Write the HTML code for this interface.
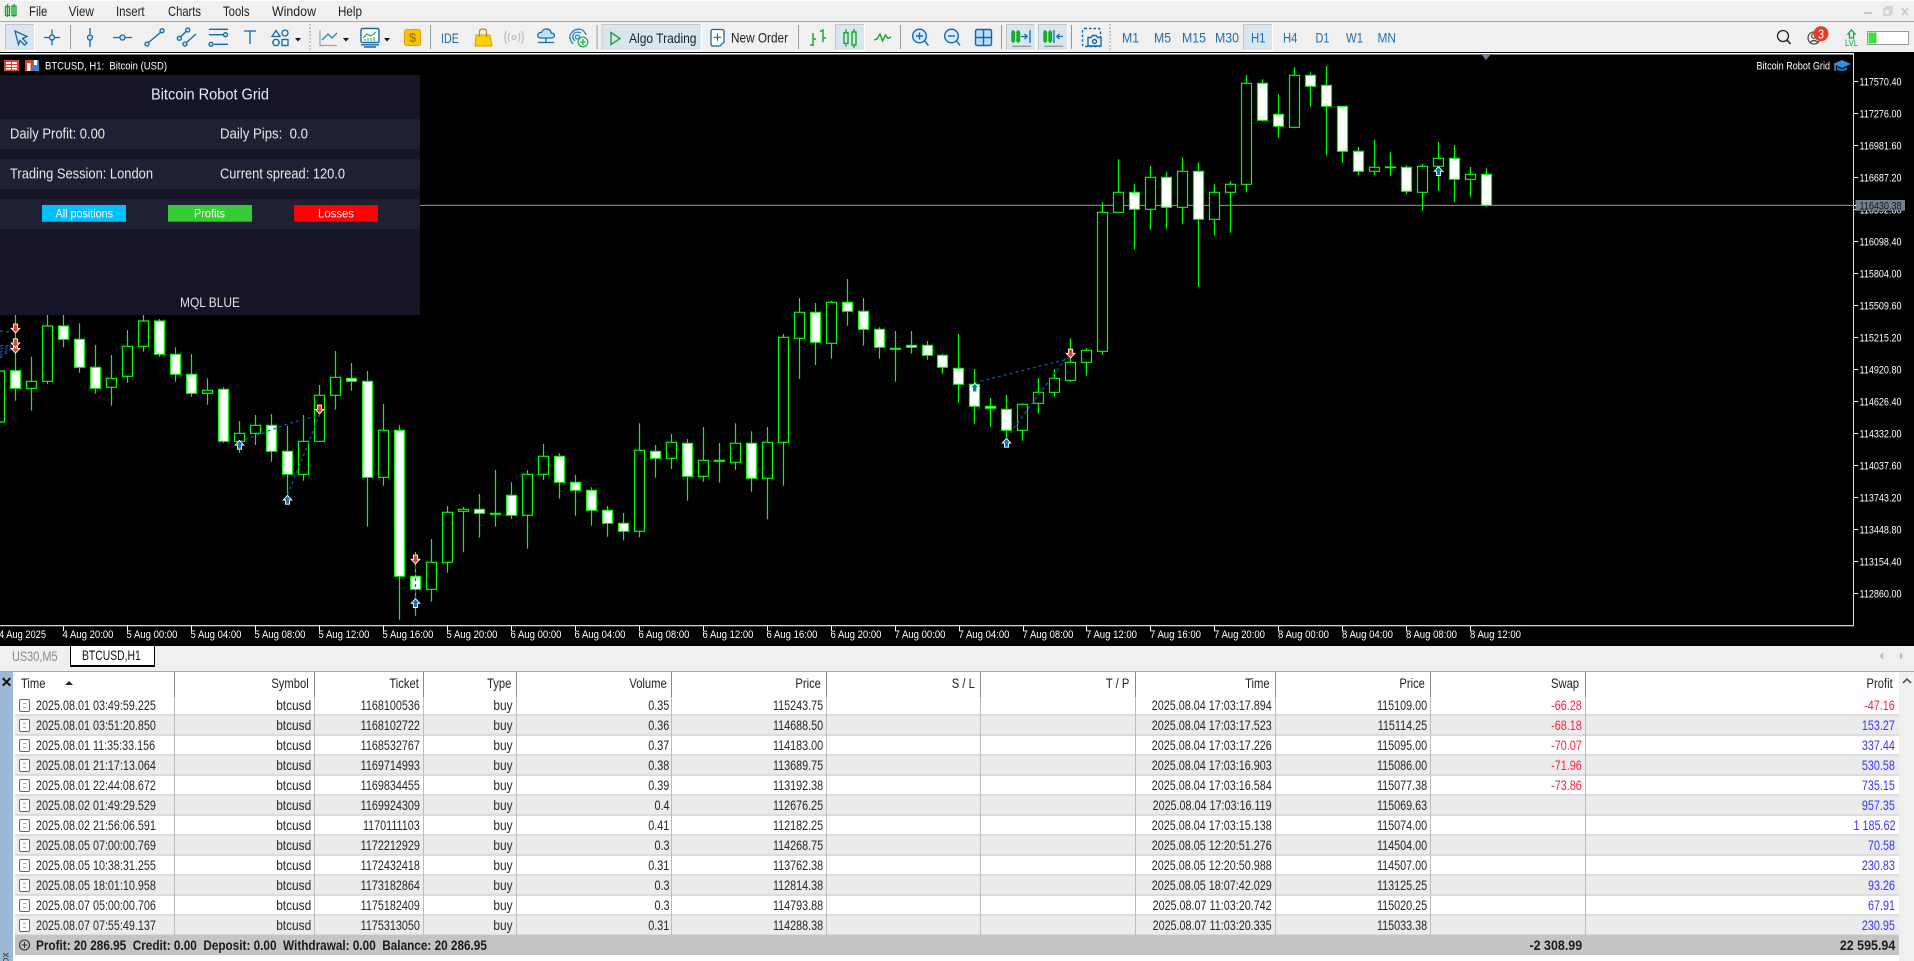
<!DOCTYPE html>
<html lang="en"><head><meta charset="utf-8"><title>MetaTrader 5 BTCUSD</title>
<style>
html,body{margin:0;padding:0;width:1914px;height:961px;overflow:hidden;background:#fff;font-family:"Liberation Sans",sans-serif}
body{position:relative}
svg{position:absolute;left:0;top:0;display:block}
svg text{font-family:"Liberation Sans",sans-serif}
.tabs{position:absolute;left:0;top:646px;width:1914px;height:25px;background:#f0f0f0}
.hl{position:absolute;left:0;top:671px;width:1914px;height:1px;background:#a8a8a8}
.strip{position:absolute;left:0;top:672px;width:13px;height:289px;background:#9cb9d8;overflow:hidden}
.side{position:absolute;left:1899px;top:672px;width:15px;height:289px;background:#f0f0f0}
.hdr{position:absolute;left:15px;top:672px;width:1884px;height:24px;background:#fff;font-size:14px;color:#222}
.hdr span,.r span{position:absolute;top:0;white-space:nowrap;transform:scaleX(.77);transform-origin:100% 50%;line-height:19px}
.hdr span{line-height:22px;transform:scaleX(.8)}
.rows{position:absolute;left:15px;top:696px;width:1884px;font-size:14px;color:#262626}
.r{position:relative;height:18px;border-bottom:2px solid #dcdcdc;background:#fff}
.r.e{background:#ebebeb}
.r i{position:absolute;left:4px;top:3px;width:9px;height:11px;border:1px solid #1f78c8;border-radius:2px;background:#fff}
.r i:after{content:"";position:absolute;left:3px;top:3px;width:3px;height:3px;border-top:1px solid #7fb2dd;border-bottom:1px solid #7fb2dd}
.r .a{left:21px;transform-origin:0 50%}
.hdr .a{left:6px;transform-origin:0 50%}
.r .s,.r .y{transform:scaleX(.85)}
.s{right:1588px}.k{right:1479px}.y{right:1386px}.v{right:1230px}.p{right:1076px}.t{right:627px}.q{right:472px}.w{right:317px;color:#ff1f3d}.f{right:4px;color:#3434ff}.f.n{color:#ff1f3d}
.sum{position:absolute;left:15px;top:935px;width:1884px;height:20px;background:#c4c4c4;font-size:14px;font-weight:bold;color:#1a1a1a}
.sum span{position:absolute;top:0;line-height:20px;white-space:nowrap;transform:scaleX(.89);transform-origin:100% 50%}
.sum .l{left:21px;transform-origin:0 50%;transform:scaleX(.84)}
.sep{position:absolute;top:672px;width:1px;height:263px;background:#bdbdbd}
.sep:before{content:"";position:absolute;left:0;top:0;width:1px;height:25px;background:#8a8a8a}
.tab{position:absolute;font-size:14px;white-space:nowrap;transform:scaleX(.78);transform-origin:0 50%;line-height:20px}
</style></head><body>

<svg width="1914" height="646" viewBox="0 0 1914 646" xmlns="http://www.w3.org/2000/svg">
<defs>
<g id="up"><path d="M0-4.600L4.300 0H2.100V4.200H-2.100V0H-4.300Z" fill="#1a6fb5" stroke="#fff" stroke-width=".9"/></g>
<g id="dn"><path d="M0 4.600L4.300 0H2.100V-4.200H-2.100V0H-4.300Z" fill="#e0452a" stroke="#fff" stroke-width=".9"/></g>
</defs>
<rect width="1914" height="52" fill="#f0f0f0"/>
<rect width="1914" height="1" fill="#fff"/>
<rect y="21" width="1914" height="1" fill="#a8a8a8"/>
<rect y="52" width="1914" height="594" fill="#000"/>

<!-- logo + menu -->
<g fill="none" stroke="#12a52a" stroke-width="1.300"><rect x="5.500" y="6.500" width="4" height="9"/><path d="M7.500 4V17"/><rect x="12" y="6" width="4" height="9.500"/><path d="M14 4V17"/></g>
<g font-size="14" fill="#222">
<text x="29" y="16" textLength="18.400" lengthAdjust="spacingAndGlyphs">File</text>
<text x="68.600" y="16" textLength="25.300" lengthAdjust="spacingAndGlyphs">View</text>
<text x="116" y="16" textLength="28.600" lengthAdjust="spacingAndGlyphs">Insert</text>
<text x="168" y="16" textLength="33" lengthAdjust="spacingAndGlyphs">Charts</text>
<text x="223" y="16" textLength="26.500" lengthAdjust="spacingAndGlyphs">Tools</text>
<text x="272" y="16" textLength="44" lengthAdjust="spacingAndGlyphs">Window</text>
<text x="338" y="16" textLength="24" lengthAdjust="spacingAndGlyphs">Help</text>
</g>
<!-- window controls -->
<rect x="1864" y="12" width="8" height="2" fill="#c4c4c4"/>
<g fill="none" stroke="#c4c4c4" stroke-width="1.200"><rect x="1884" y="9" width="6" height="6"/><path d="M1886 9V7H1892V13H1890"/><path d="M1902 8L1908 15M1908 8L1902 15" stroke-width="1.500"/></g>

<!-- active buttons -->
<g fill="#d8e6f2" stroke="none">
<rect x="5" y="24" width="29" height="26"/><rect x="601.500" y="24" width="99.500" height="26"/><rect x="835" y="24" width="29" height="26"/><rect x="1006" y="24" width="29" height="26"/><rect x="1038" y="24" width="29" height="26"/><rect x="1243" y="24" width="29" height="26"/>
</g>
<g fill="none" stroke="#c6c6c6"><path d="M5.500 50V24.500H34"/><path d="M602 50V24.500H701"/><path d="M835.500 50V24.500H864"/><path d="M1006.500 50V24.500H1035"/><path d="M1038.500 50V24.500H1067"/><path d="M1243.500 50V24.500H1272"/></g>
<g fill="none" stroke="#fff"><path d="M34.500 24V50.500H5"/><path d="M701.500 24V50.500H602"/><path d="M864.500 24V50.500H835"/><path d="M1035.500 24V50.500H1006"/><path d="M1067.500 24V50.500H1038"/><path d="M1272.500 24V50.500H1243"/></g>

<!-- separators -->
<g stroke="#9a9a9a" stroke-width="1"><path d="M70.500 25V49M430.500 25V49M597 25V49M798.500 25V49M900.500 25V49M1001.500 25V49M1071.500 25V49"/></g>
<g stroke="#bdbdbd" stroke-width="2" stroke-dasharray="1.500 2"><path d="M310 24V50M1110 24V50"/></g>

<!-- drawing tools -->
<g fill="none" stroke="#1268ad" stroke-width="1.300">
<path d="M15 31L27 36.500L22.500 38.500L27 43L24.500 45L20 40.500L18.500 44.500Z" fill="#dcebf7"/>
<path d="M44 37.500H60M52 29.500V45.500"/><circle cx="52" cy="37.500" r="2.500" fill="#cfe3f4"/>
<path d="M90 28V47"/><circle cx="90" cy="37.500" r="2.500" fill="#cfe3f4"/>
<path d="M113 37.500H132"/><circle cx="122.500" cy="37.500" r="2.500" fill="#cfe3f4"/>
<path d="M148 43L161 32"/><circle cx="147" cy="44" r="2" fill="#cfe3f4"/><circle cx="162" cy="30.700" r="2" fill="#cfe3f4"/>
<path d="M180.500 37L186.500 31M186 43L196 34"/><circle cx="179.300" cy="38.300" r="2" fill="#cfe3f4"/><circle cx="187.700" cy="30" r="2" fill="#cfe3f4"/><circle cx="185" cy="44" r="2" fill="#cfe3f4"/>
<path d="M209 29.300H228M209 34.700H223M214 44.300H228"/><circle cx="225.500" cy="34.700" r="2" fill="#cfe3f4"/><circle cx="211" cy="44.300" r="2" fill="#cfe3f4"/>
<path d="M244 31H256M250 31V44"/>
<path d="M276 30.500L280 36.500H272Z"/><circle cx="285" cy="33" r="3"/><path d="M272.500 42.500L274.300 39.500H277.700L279.500 42.500L277.700 45.500H274.300Z"/><rect x="282" y="39.500" width="6" height="6"/>
</g>
<g fill="#111"><path d="M295 38H301L298 41.500Z"/><path d="M343 38H349L346 41.500Z"/><path d="M384 38H390L387 41.500Z"/></g>

<!-- chart type icons -->
<path d="M320 30V45.500H337" fill="none" stroke="#a0a0a0" stroke-width="1.200"/>
<path d="M322 40L328 34L332 38L337 33" fill="none" stroke="#2a83c9" stroke-width="1.300"/>
<g fill="none" stroke="#1268ad" stroke-width="1.400"><rect x="361" y="28.500" width="18" height="14" rx="1.500" fill="#fff"/><path d="M361 44.800H379M364 47H376"/></g>
<path d="M363 38L367 34L371 36L376 32" fill="none" stroke="#1a9a3a"/><path d="M365 41V39M368 41V38M371 41V38M374 41V37" stroke="#1a9a3a"/>
<rect x="404.500" y="29.500" width="16" height="16" rx="2" fill="#fdc300" stroke="#dd9f10"/>
<text x="412.500" y="42" font-size="13" font-weight="bold" text-anchor="middle" fill="#a97f00">$</text>
<text x="441" y="43" font-size="14" fill="#1b6aa8" textLength="18" lengthAdjust="spacingAndGlyphs">IDE</text>
<path d="M476 35H490L492 46H475Z" fill="#ffd000" stroke="#cd9c20"/><path d="M479.500 37V31.500Q479.500 29 483 29Q486.500 29 486.500 31.500V37" fill="none" stroke="#b98a10" stroke-width="1.200"/>
<g fill="none" stroke="#c0c0c0" stroke-width="1.300"><circle cx="514" cy="37.500" r="2"/><path d="M509.500 33Q507 37.500 509.500 42M518.500 33Q521 37.500 518.500 42M506.500 31Q503 37.500 506.500 44M521.500 31Q525 37.500 521.500 44"/></g>
<path d="M541 38Q537 38 538 34.500Q539 32 541.500 32.500Q543 28.500 547 29Q551 29.500 551 33Q555 33.500 554.500 36Q554 38 551 38Z" fill="#bfe0f8" stroke="#1268ad" stroke-width="1.200"/>
<path d="M546 38V42M538 42.500H554" fill="none" stroke="#1268ad" stroke-width="1.300"/>
<g fill="none" stroke="#2a83c9" stroke-width="1.300"><path d="M573 44Q568 38 571 33.500Q575 28 581 29.500Q585 31 586 35M575 41Q571 37 574 33.500Q577 31 581 33"/><circle cx="577.500" cy="37" r="2"/></g>
<circle cx="583" cy="42" r="4.800" fill="#fff" stroke="#19b84a" stroke-width="1.300"/><path d="M583 39V45M580 42H586" stroke="#19b84a" stroke-width="1.300"/>

<!-- algo / order -->
<path d="M611 32.500L620 38.500L611 44.500Z" fill="none" stroke="#16a32a" stroke-width="1.400"/>
<text x="629" y="43" font-size="14" fill="#222" textLength="67.500" lengthAdjust="spacingAndGlyphs">Algo Trading</text>
<path d="M713 29.500H722Q724 29.500 724 31.500V42L720 46H713Q711 46 711 44V31.500Q711 29.500 713 29.500Z" fill="#fff" stroke="#1268ad" stroke-width="1.300"/><path d="M717.500 33.500V41M713.800 37.300H721.200" stroke="#1268ad" stroke-width="1.100"/>
<text x="731" y="42.500" font-size="14" fill="#222" textLength="57" lengthAdjust="spacingAndGlyphs">New Order</text>

<!-- chart modes -->
<g fill="none" stroke="#11aa22" stroke-width="1.400">
<path d="M813 33V46M810 45H813M813 39H816M823 29V42M820 31H823M823 38H826"/>
<rect x="844" y="32.700" width="4" height="10.700"/><path d="M846 29.500V32.700M846 43.400V46.500"/><rect x="852" y="32" width="4" height="13"/><path d="M854 29V32M854 45V48"/>
<path d="M874 40L877 39L880 34L882.500 41L885.500 35L888 38.500L891 37"/>
<rect x="1012" y="32" width="2.500" height="9"/><path d="M1013.200 30V43"/><rect x="1017" y="32" width="2.500" height="9"/><path d="M1018.200 30V43"/>
<rect x="1044" y="32" width="2.500" height="9"/><path d="M1045.200 30V43"/><rect x="1049" y="32" width="2.500" height="9"/><path d="M1050.200 30V43"/>
</g>
<g fill="none" stroke="#1268ad" stroke-width="1.300">
<path d="M1021 36.500H1027M1024.500 34L1027.200 36.500L1024.500 39M1030 30V43"/>
<path d="M1054 30V43M1063 36.500H1057M1059.500 34L1056.800 36.500L1059.500 39"/>
</g>
<path d="M1012 46.300H1031M1044 46.300H1063" stroke="#9a9a9a" stroke-width="1.300"/>
<g fill="none" stroke="#1268ad" stroke-width="1.400">
<circle cx="919.500" cy="36" r="6.800" fill="#d6ecfb"/><path d="M924.500 41L928.500 45.500"/><path d="M916 36H923M919.500 32.500V39.500"/>
<circle cx="951.500" cy="36" r="6.800" fill="#d6ecfb"/><path d="M956.500 41L960 45.500"/><path d="M948 36H955"/>
<rect x="975.500" y="29.500" width="16" height="16" rx="1.500" fill="#b5def8"/><path d="M983.500 29.500V45.500M975.500 37.500H991.500"/>
<rect x="1082.500" y="28.500" width="18" height="18" rx="2" stroke-dasharray="2.500 2"/>
<path d="M1088 37.500H1091L1092.500 35.500H1096L1097.500 37.500H1101V46H1088Z" fill="#f0f0f0"/><circle cx="1094.500" cy="41.500" r="2"/>
</g>

<!-- timeframes -->
<g font-size="14" fill="#1e6fb0">
<text x="1122" y="42.500" textLength="17" lengthAdjust="spacingAndGlyphs">M1</text>
<text x="1154" y="42.500" textLength="17" lengthAdjust="spacingAndGlyphs">M5</text>
<text x="1182" y="42.500" textLength="24" lengthAdjust="spacingAndGlyphs">M15</text>
<text x="1215" y="42.500" textLength="24" lengthAdjust="spacingAndGlyphs">M30</text>
<text x="1251" y="42.500" textLength="14.500" lengthAdjust="spacingAndGlyphs">H1</text>
<text x="1283" y="42.500" textLength="14.500" lengthAdjust="spacingAndGlyphs">H4</text>
<text x="1315.500" y="42.500" textLength="14" lengthAdjust="spacingAndGlyphs">D1</text>
<text x="1346" y="42.500" textLength="17" lengthAdjust="spacingAndGlyphs">W1</text>
<text x="1377.500" y="42.500" textLength="18.500" lengthAdjust="spacingAndGlyphs">MN</text>
</g>

<!-- right tools -->
<circle cx="1783" cy="36" r="5.500" fill="none" stroke="#222" stroke-width="1.300"/><path d="M1787 40L1790.500 44" stroke="#222" stroke-width="1.500"/>
<g fill="none" stroke="#444" stroke-width="1.200"><circle cx="1814" cy="38" r="6"/><circle cx="1814" cy="36" r="2.300"/><path d="M1810 42.500Q1814 38.500 1818 42.500"/></g>
<circle cx="1821" cy="33.700" r="7.500" fill="#e23c28"/><text x="1821" y="38.300" font-size="13" text-anchor="middle" fill="#fff" textLength="6" lengthAdjust="spacingAndGlyphs">3</text>
<path d="M1851.500 30L1855 34H1853.500V38H1849.500V34H1848Z" fill="none" stroke="#13a53f" stroke-width="1.300"/>
<text x="1845" y="46" font-size="9" fill="#13a53f" textLength="13" lengthAdjust="spacingAndGlyphs">LVL</text>
<rect x="1867.500" y="31.500" width="41" height="13" fill="#fff" stroke="#999"/><rect x="1868.500" y="32.500" width="8" height="11" fill="#3ede3e"/>

<!-- chart frame -->
<rect y="53" width="1854" height="1.500" fill="#fff"/>
<rect x="1853" y="53" width="1" height="573" fill="#e8e8e8"/>
<rect y="625" width="1854" height="1.300" fill="#d0d0d0"/>
<path d="M1481 54H1491L1486 60Z" fill="#708090"/>
<rect x="420" y="204.800" width="1434" height="1.200" fill="#808080"/>

<!-- wicks -->
<path fill="none" stroke="#0f0" stroke-width="1.200" d="M-.5 371V425M15.500 315V400.700M31.500 356.700V410.700M47.500 315V384M63.500 315V347.300M79.500 323.300V372.700M95.500 345V393.700M111.500 355V405.700M127.500 330V382.700M143.500 315V351.700M159.500 319V356.700M175.500 347.300V381.700M191.500 354V396.700M207.500 378.300V404.700M223.500 387.300V442.700M239.500 421V452.700M255.500 415V445M271.500 414V461.700M287.500 426V496.700M303.500 415V480.700M319.500 385V441.300M335.500 351V409.700M351.500 363V390.700M367.500 371V526.700M383.500 404V485.700M399.500 425.300V619.700M415.500 552V615.700M431.500 539V601.700M447.500 506V572.700M463.500 506.700V552.300M479.500 494V537.700M495.500 469.700V526.700M511.500 482.300V519M527.500 470V548.700M543.500 444V480M559.500 453.300V498.700M575.500 474.700V515.700M591.500 487.300V525.700M607.500 506V536.700M623.500 513V540.300M639.500 423.300V537.300M655.500 445V477.700M671.500 434V469M687.500 439V500.700M703.500 427V481.700M719.500 443V482.700M735.500 423.300V470M751.500 431.300V491.700M767.500 427V519.300M783.500 334V485.700M799.500 298V379M815.500 303V365M831.500 301V358.700M847.500 279V325.700M863.500 298V345.700M879.500 327.300V358.700M895.500 331V381.700M911.500 331V353.700M927.500 341V359.700M942.500 354V373.700M958.500 334V402.700M974.500 369V423.700M990.500 398V426.700M1006.500 395V441.700M1022.500 403.300V440.700M1038.500 378V413.700M1054.500 369V396.700M1070.500 338.300V381.700M1086.500 348.300V375.700M1102.500 202.300V354.700M1118.500 159.300V212.300M1134.500 184V249.300M1150.500 166V229.700M1166.500 172.300V228.700M1182.500 157.300V223.700M1198.500 162.300V287M1214.500 184.300V235.700M1230.500 181.300V232.700M1246.500 75.300V192.300M1262.500 79.300V121.700M1278.500 94.300V137.700M1294.500 67.300V128.300M1310.500 72.300V106.700M1326.500 66V155.300M1342.500 106V162.700M1358.500 147V175M1374.500 140V175M1390.500 152.300V176.300M1406.500 165.300V194.300M1422.500 164V210.700M1438.500 142V190.700M1454.500 145V201.700M1470.500 167V196.700M1486.500 168.300V206.700"/>
<!-- bull bodies -->
<path fill="#000" stroke="#0f0" stroke-width="1.200" d="M-5.500 371h10V422h-10zM26.500 381.300h10V388.300h-10zM42.500 326h10V381.300h-10zM106.500 378.300h10V387.300h-10zM122.500 346.300h10V376.300h-10zM138.500 321h10V346.300h-10zM202.500 390.300h10V393.300h-10zM234.500 433.300h10V441.300h-10zM250.500 425.300h10V433.300h-10zM298.500 441.300h10V474.300h-10zM314.500 395.300h10V441.300h-10zM330.500 377.300h10V395.300h-10zM378.500 430.300h10V477.300h-10zM426.500 562.300h10V589.300h-10zM442.500 512.300h10V562.300h-10zM458.500 509.300h10V511.300h-10zM522.500 474.300h10V515.300h-10zM538.500 456.300h10V474.300h-10zM634.500 450.300h10V531.300h-10zM666.500 442.300h10V458.300h-10zM698.500 460.300h10V476.300h-10zM730.500 443.300h10V462.300h-10zM762.500 442.300h10V478.300h-10zM778.500 337.300h10V442.300h-10zM794.500 312.300h10V338.300h-10zM826.500 302.300h10V343.300h-10zM1017.500 404.300h10V430.300h-10zM1033.500 392.300h10V403.300h-10zM1049.500 378.300h10V392.300h-10zM1065.500 362.300h10V380.300h-10zM1081.500 350.300h10V362.300h-10zM1097.500 212.300h10V351.300h-10zM1113.500 192.300h10V212.300h-10zM1145.500 177.300h10V209.300h-10zM1177.500 171.300h10V207.300h-10zM1209.500 192.300h10V219.300h-10zM1225.500 184.300h10V192.300h-10zM1241.500 83.300h10V184.300h-10zM1289.500 75.300h10V127.300h-10zM1369.500 167.300h10V171.300h-10zM1417.500 166.300h10V192.300h-10zM1433.500 158.300h10V166.300h-10zM1465.500 174.300h10V179.300h-10zM490.500 513.300h10V514.300h-10zM714.500 460.300h10V461.300h-10zM890.500 348.300h10V349.300h-10zM1385.500 167h10V167.700h-10z"/>
<!-- bear bodies -->
<path fill="#fff" stroke="#0f0" stroke-width="1.200" d="M10.500 370.700h10V388.300h-10zM58.500 326h10V339.300h-10zM74.500 339.300h10V367.300h-10zM90.500 367.300h10V388.300h-10zM154.500 321h10V354.300h-10zM170.500 354.300h10V374.300h-10zM186.500 374.300h10V393.300h-10zM218.500 389.300h10V441.300h-10zM266.500 425.300h10V451.300h-10zM282.500 451.300h10V474.300h-10zM346.500 378.300h10V381.300h-10zM362.500 381.300h10V477.300h-10zM394.500 430.300h10V576.300h-10zM410.500 576.300h10V589.300h-10zM474.500 509.300h10V513.300h-10zM506.500 495.300h10V515.300h-10zM554.500 456.300h10V482.300h-10zM570.500 482.300h10V490.300h-10zM586.500 490.300h10V510.300h-10zM602.500 510.300h10V523.300h-10zM618.500 523.300h10V531.300h-10zM650.500 451.300h10V458.300h-10zM682.500 443.300h10V476.300h-10zM746.500 443.300h10V478.300h-10zM810.500 312.300h10V342.300h-10zM842.500 302.300h10V311.300h-10zM858.500 311.300h10V329.300h-10zM874.500 329.300h10V347.300h-10zM906.500 345.300h10V347.300h-10zM922.500 345.300h10V355.300h-10zM937.500 355.300h10V367.300h-10zM953.500 368.300h10V384.300h-10zM969.500 384.300h10V406.300h-10zM985.500 406.300h10V408.300h-10zM1001.500 409.300h10V430.300h-10zM1129.500 192.300h10V209.300h-10zM1161.500 177.300h10V207.300h-10zM1193.500 171.300h10V219.300h-10zM1257.500 83.300h10V120.300h-10zM1273.500 114.300h10V126.300h-10zM1305.500 75.300h10V86.300h-10zM1321.500 85.300h10V106.300h-10zM1337.500 106.300h10V151.300h-10zM1353.500 151.300h10V171.300h-10zM1401.500 167.300h10V191.300h-10zM1449.500 158.300h10V179.300h-10zM1481.500 174.300h10V205.300h-10z"/>
<!-- dashed trade lines -->
<g fill="none" stroke="#0d5fa8" stroke-width="1.200" stroke-dasharray="3 3">
<path d="M239.500 441.500L287.500 424L319.500 415"/><path d="M287.500 495L319.500 415"/><path d="M415.500 560V600"/><path d="M974.700 382.700L1070.600 358.300"/><path d="M1006.500 438L1066 358"/>
<path d="M0 331L10 332"/><path d="M0 358L15 346M0 355.500L14 345M0 352.500L12 344.500M0 349L9 345M0 346L6 345"/>
</g>
<!-- markers -->
<use href="#dn" x="15.500" y="328.300"/><use href="#dn" x="15.500" y="348.500"/><use href="#dn" x="15.500" y="343"/><use href="#up" x="239.500" y="445"/><use href="#up" x="287.500" y="500"/><use href="#dn" x="319.500" y="409.300"/><use href="#dn" x="415.500" y="559.300"/><use href="#up" x="415.500" y="603.300"/><use href="#up" x="974.700" y="387.700"/><use href="#up" x="1006.500" y="443"/><use href="#dn" x="1070.600" y="353.300"/><use href="#up" x="1438.500" y="171.300"/>

<!-- price axis -->
<path stroke="#fff" d="M1854 81.500h4M1854 113.500h4M1854 145.500h4M1854 177.500h4M1854 209.500h4M1854 241.500h4M1854 273.500h4M1854 305.500h4M1854 337.500h4M1854 369.500h4M1854 401.500h4M1854 433.500h4M1854 465.500h4M1854 497.500h4M1854 529.500h4M1854 561.500h4M1854 593.500h4"/>
<g font-size="11" fill="#fff">
<text x="1859.500" y="85.700" textLength="42" lengthAdjust="spacingAndGlyphs">117570.40</text>
<text x="1859.500" y="117.500" textLength="42" lengthAdjust="spacingAndGlyphs">117276.00</text>
<text x="1859.500" y="149.700" textLength="42" lengthAdjust="spacingAndGlyphs">116981.60</text>
<text x="1859.500" y="181.500" textLength="42" lengthAdjust="spacingAndGlyphs">116687.20</text>
<text x="1859.500" y="213.500" textLength="42" lengthAdjust="spacingAndGlyphs">116392.80</text>
<text x="1859.500" y="245.500" textLength="42" lengthAdjust="spacingAndGlyphs">116098.40</text>
<text x="1859.500" y="277.500" textLength="42" lengthAdjust="spacingAndGlyphs">115804.00</text>
<text x="1859.500" y="309.500" textLength="42" lengthAdjust="spacingAndGlyphs">115509.60</text>
<text x="1859.500" y="341.500" textLength="42" lengthAdjust="spacingAndGlyphs">115215.20</text>
<text x="1859.500" y="373.500" textLength="42" lengthAdjust="spacingAndGlyphs">114920.80</text>
<text x="1859.500" y="405.500" textLength="42" lengthAdjust="spacingAndGlyphs">114626.40</text>
<text x="1859.500" y="437.500" textLength="42" lengthAdjust="spacingAndGlyphs">114332.00</text>
<text x="1859.500" y="469.500" textLength="42" lengthAdjust="spacingAndGlyphs">114037.60</text>
<text x="1859.500" y="501.500" textLength="42" lengthAdjust="spacingAndGlyphs">113743.20</text>
<text x="1859.500" y="533.500" textLength="42" lengthAdjust="spacingAndGlyphs">113448.80</text>
<text x="1859.500" y="565.500" textLength="42" lengthAdjust="spacingAndGlyphs">113154.40</text>
<text x="1859.500" y="597.500" textLength="42" lengthAdjust="spacingAndGlyphs">112860.00</text>
</g>
<rect x="1855.500" y="200" width="49.500" height="10.700" fill="#708090"/>
<path d="M1854 205.500h2" stroke="#fff"/>
<text x="1859.500" y="209.500" font-size="11" fill="#111" textLength="42" lengthAdjust="spacingAndGlyphs">116430.38</text>

<!-- time axis -->
<path stroke="#fff" d="M63.500 626v5M127.500 626v5M191.500 626v5M255.500 626v5M319.500 626v5M383.500 626v5M447.500 626v5M511.500 626v5M575.500 626v5M639.500 626v5M703.500 626v5M767.500 626v5M831.500 626v5M895.500 626v5M959.500 626v5M1023.500 626v5M1086.500 626v5M1150.500 626v5M1214.500 626v5M1278.500 626v5M1342.500 626v5M1406.500 626v5M1470.500 626v5"/>
<g font-size="11" fill="#fff">
<text x="-1" y="638" textLength="47" lengthAdjust="spacingAndGlyphs">4 Aug 2025</text>
<text x="62.500" y="638" textLength="51" lengthAdjust="spacingAndGlyphs">4 Aug 20:00</text>
<text x="126.500" y="638" textLength="51" lengthAdjust="spacingAndGlyphs">5 Aug 00:00</text>
<text x="190.500" y="638" textLength="51" lengthAdjust="spacingAndGlyphs">5 Aug 04:00</text>
<text x="254.500" y="638" textLength="51" lengthAdjust="spacingAndGlyphs">5 Aug 08:00</text>
<text x="318.500" y="638" textLength="51" lengthAdjust="spacingAndGlyphs">5 Aug 12:00</text>
<text x="382.500" y="638" textLength="51" lengthAdjust="spacingAndGlyphs">5 Aug 16:00</text>
<text x="446.500" y="638" textLength="51" lengthAdjust="spacingAndGlyphs">5 Aug 20:00</text>
<text x="510.500" y="638" textLength="51" lengthAdjust="spacingAndGlyphs">6 Aug 00:00</text>
<text x="574.500" y="638" textLength="51" lengthAdjust="spacingAndGlyphs">6 Aug 04:00</text>
<text x="638.500" y="638" textLength="51" lengthAdjust="spacingAndGlyphs">6 Aug 08:00</text>
<text x="702.500" y="638" textLength="51" lengthAdjust="spacingAndGlyphs">6 Aug 12:00</text>
<text x="766.500" y="638" textLength="51" lengthAdjust="spacingAndGlyphs">6 Aug 16:00</text>
<text x="830.500" y="638" textLength="51" lengthAdjust="spacingAndGlyphs">6 Aug 20:00</text>
<text x="894.500" y="638" textLength="51" lengthAdjust="spacingAndGlyphs">7 Aug 00:00</text>
<text x="958.500" y="638" textLength="51" lengthAdjust="spacingAndGlyphs">7 Aug 04:00</text>
<text x="1022.500" y="638" textLength="51" lengthAdjust="spacingAndGlyphs">7 Aug 08:00</text>
<text x="1086" y="638" textLength="51" lengthAdjust="spacingAndGlyphs">7 Aug 12:00</text>
<text x="1150" y="638" textLength="51" lengthAdjust="spacingAndGlyphs">7 Aug 16:00</text>
<text x="1214" y="638" textLength="51" lengthAdjust="spacingAndGlyphs">7 Aug 20:00</text>
<text x="1278" y="638" textLength="51" lengthAdjust="spacingAndGlyphs">8 Aug 00:00</text>
<text x="1342" y="638" textLength="51" lengthAdjust="spacingAndGlyphs">8 Aug 04:00</text>
<text x="1406" y="638" textLength="51" lengthAdjust="spacingAndGlyphs">8 Aug 08:00</text>
<text x="1470" y="638" textLength="51" lengthAdjust="spacingAndGlyphs">8 Aug 12:00</text>
</g>

<!-- title row -->
<rect x="4" y="60" width="15" height="11" fill="#e0402a"/><path d="M6 62h5v2h-5zM12 62h5v2h-5zM6 65h5v2h-5zM12 65h5v2h-5zM6 68h5v1.500h-5zM12 68h5v1.500h-5z" fill="#fff"/>
<rect x="25" y="60" width="7.500" height="11" fill="#e0402a"/><rect x="27" y="63" width="3.500" height="8" fill="#fff"/><rect x="32.500" y="60" width="6.500" height="11" fill="#2a8ad8"/><rect x="34" y="60" width="3" height="5" fill="#fff"/>
<text x="45" y="69.500" font-size="11" fill="#fff" textLength="122" lengthAdjust="spacingAndGlyphs">BTCUSD, H1:&#160; Bitcoin (USD)</text>
<text x="1756.500" y="69.500" font-size="11" fill="#fff" textLength="73.500" lengthAdjust="spacingAndGlyphs">Bitcoin Robot Grid</text>
<path d="M1833 64L1842 60L1851 64L1842 68Z" fill="#3a8fd8"/><path d="M1837 67V70Q1842 72 1847 70V67L1842 69Z" fill="#1c6fb8"/><path d="M1835 65V71" stroke="#3a8fd8" stroke-width="1.500"/>

<!-- info panel -->
<rect y="75" width="420" height="240" fill="#151527"/>
<rect y="119" width="420" height="30" fill="#1e2033"/><rect y="159" width="420" height="30" fill="#1e2033"/><rect y="199" width="420" height="30" fill="#1e2033"/>
<text x="151" y="99.300" font-size="16" fill="#e4ecf4" textLength="118" lengthAdjust="spacingAndGlyphs">Bitcoin Robot Grid</text>
<g font-size="15" fill="#e8e8e8">
<text x="10" y="138.500" textLength="95" lengthAdjust="spacingAndGlyphs">Daily Profit: 0.00</text>
<text x="220" y="138.500" textLength="88" lengthAdjust="spacingAndGlyphs">Daily Pips:&#160; 0.0</text>
<text x="10" y="178.500" textLength="143" lengthAdjust="spacingAndGlyphs">Trading Session: London</text>
<text x="220" y="178.500" textLength="125" lengthAdjust="spacingAndGlyphs">Current spread: 120.0</text>
</g>
<rect x="42" y="205" width="84" height="16.700" fill="#00bfff"/><rect x="168" y="205" width="84" height="16.700" fill="#32cd32"/><rect x="294" y="205" width="84" height="16.700" fill="#f00"/>
<g font-size="12" fill="#fff">
<text x="55.500" y="217.500" textLength="57.500" lengthAdjust="spacingAndGlyphs">All positions</text>
<text x="194" y="217.500" textLength="31" lengthAdjust="spacingAndGlyphs">Profits</text>
<text x="318" y="217.500" textLength="36" lengthAdjust="spacingAndGlyphs">Losses</text>
</g>
<text x="180" y="307" font-size="14" fill="#e0e0e0" textLength="60" lengthAdjust="spacingAndGlyphs">MQL BLUE</text>
</svg>

<!-- tabs -->
<div class="tabs"></div>
<div class="tab" style="left:12px;top:646px;color:#8a8a8a">US30,M5</div>
<div style="position:absolute;left:70px;top:645px;width:83px;height:19px;background:#fff;border:1px solid #000;border-bottom-width:2px;border-right-width:1.500px"></div>
<div class="tab" style="left:82px;top:645px;color:#111;transform:scaleX(.74)">BTCUSD,H1</div>
<div class="hl"></div>
<div class="strip"><div style="position:absolute;left:-14px;top:294px;width:40px;height:13px;font-size:10px;color:#333;line-height:13px;text-align:right;transform:rotate(-90deg);transform-origin:50% 50%">box</div></div>
<div style="position:absolute;left:0;top:672px;width:13px;height:20px;font-size:14px;font-weight:bold;color:#111;text-align:center;line-height:20px">&#10005;</div>
<div class="side"></div>
<svg style="left:1878px;top:650px" width="36" height="40" viewBox="0 0 36 40"><path d="M5 2L2 6L5 10Z" fill="#b8b8b8"/><path d="M22 2L25 6L22 10Z" fill="#b8b8b8"/><path d="M25 33L29 29L33 33" fill="none" stroke="#444" stroke-width="1.500"/></svg>

<!-- header -->
<div class="hdr">
<span class="a">Time</span>
<span style="right:1590px">Symbol</span>
<span style="right:1480.600px">Ticket</span>
<span style="right:1388px">Type</span>
<span style="right:1232.500px">Volume</span>
<span style="right:1078px">Price</span>
<span style="right:924.300px">S / L</span>
<span style="right:769.600px">T / P</span>
<span style="right:629px">Time</span>
<span style="right:474px">Price</span>
<span style="right:320px">Swap</span>
<span style="right:6px">Profit</span>
</div>
<svg style="left:64px;top:680px" width="10" height="6" viewBox="0 0 10 6"><path d="M1 5H9L5 1Z" fill="#222"/></svg>

<!-- rows -->
<div class="rows">
<div class="r"><i></i><span class="a">2025.08.01 03:49:59.225</span><span class="s">btcusd</span><span class="k">1168100536</span><span class="y">buy</span><span class="v">0.35</span><span class="p">115243.75</span><span class="t">2025.08.04 17:03:17.894</span><span class="q">115109.00</span><span class="w">-66.28</span><span class="f n">-47.16</span></div>
<div class="r e"><i></i><span class="a">2025.08.01 03:51:20.850</span><span class="s">btcusd</span><span class="k">1168102722</span><span class="y">buy</span><span class="v">0.36</span><span class="p">114688.50</span><span class="t">2025.08.04 17:03:17.523</span><span class="q">115114.25</span><span class="w">-68.18</span><span class="f">153.27</span></div>
<div class="r"><i></i><span class="a">2025.08.01 11:35:33.156</span><span class="s">btcusd</span><span class="k">1168532767</span><span class="y">buy</span><span class="v">0.37</span><span class="p">114183.00</span><span class="t">2025.08.04 17:03:17.226</span><span class="q">115095.00</span><span class="w">-70.07</span><span class="f">337.44</span></div>
<div class="r e"><i></i><span class="a">2025.08.01 21:17:13.064</span><span class="s">btcusd</span><span class="k">1169714993</span><span class="y">buy</span><span class="v">0.38</span><span class="p">113689.75</span><span class="t">2025.08.04 17:03:16.903</span><span class="q">115086.00</span><span class="w">-71.96</span><span class="f">530.58</span></div>
<div class="r"><i></i><span class="a">2025.08.01 22:44:08.672</span><span class="s">btcusd</span><span class="k">1169834455</span><span class="y">buy</span><span class="v">0.39</span><span class="p">113192.38</span><span class="t">2025.08.04 17:03:16.584</span><span class="q">115077.38</span><span class="w">-73.86</span><span class="f">735.15</span></div>
<div class="r e"><i></i><span class="a">2025.08.02 01:49:29.529</span><span class="s">btcusd</span><span class="k">1169924309</span><span class="y">buy</span><span class="v">0.4</span><span class="p">112676.25</span><span class="t">2025.08.04 17:03:16.119</span><span class="q">115069.63</span><span class="f">957.35</span></div>
<div class="r"><i></i><span class="a">2025.08.02 21:56:06.591</span><span class="s">btcusd</span><span class="k">1170111103</span><span class="y">buy</span><span class="v">0.41</span><span class="p">112182.25</span><span class="t">2025.08.04 17:03:15.138</span><span class="q">115074.00</span><span class="f">1 185.62</span></div>
<div class="r e"><i></i><span class="a">2025.08.05 07:00:00.769</span><span class="s">btcusd</span><span class="k">1172212929</span><span class="y">buy</span><span class="v">0.3</span><span class="p">114268.75</span><span class="t">2025.08.05 12:20:51.276</span><span class="q">114504.00</span><span class="f">70.58</span></div>
<div class="r"><i></i><span class="a">2025.08.05 10:38:31.255</span><span class="s">btcusd</span><span class="k">1172432418</span><span class="y">buy</span><span class="v">0.31</span><span class="p">113762.38</span><span class="t">2025.08.05 12:20:50.988</span><span class="q">114507.00</span><span class="f">230.83</span></div>
<div class="r e"><i></i><span class="a">2025.08.05 18:01:10.958</span><span class="s">btcusd</span><span class="k">1173182864</span><span class="y">buy</span><span class="v">0.3</span><span class="p">112814.38</span><span class="t">2025.08.05 18:07:42.029</span><span class="q">113125.25</span><span class="f">93.26</span></div>
<div class="r"><i></i><span class="a">2025.08.07 05:00:00.706</span><span class="s">btcusd</span><span class="k">1175182409</span><span class="y">buy</span><span class="v">0.3</span><span class="p">114793.88</span><span class="t">2025.08.07 11:03:20.742</span><span class="q">115020.25</span><span class="f">67.91</span></div>
<div class="r e"><i></i><span class="a">2025.08.07 07:55:49.137</span><span class="s">btcusd</span><span class="k">1175313050</span><span class="y">buy</span><span class="v">0.31</span><span class="p">114288.38</span><span class="t">2025.08.07 11:03:20.335</span><span class="q">115033.38</span><span class="f">230.95</span></div>
</div>

<!-- separators -->
<div class="sep" style="left:174px"></div><div class="sep" style="left:314px"></div><div class="sep" style="left:423px"></div><div class="sep" style="left:516px"></div><div class="sep" style="left:671px"></div><div class="sep" style="left:826px"></div><div class="sep" style="left:980px"></div><div class="sep" style="left:1135px"></div><div class="sep" style="left:1275px"></div><div class="sep" style="left:1430px"></div><div class="sep" style="left:1585px"></div>

<!-- summary -->
<div class="sum">
<span class="l">Profit: 20 286.95&#160; Credit: 0.00&#160; Deposit: 0.00&#160; Withdrawal: 0.00&#160; Balance: 20 286.95</span>
<span style="right:317px">-2 308.99</span>
<span style="right:4px">22 595.94</span>
</div>
<svg style="left:18px;top:938px" width="14" height="14" viewBox="0 0 14 14"><circle cx="6.500" cy="7" r="5" fill="none" stroke="#333" stroke-width="1.100"/><path d="M6.500 4V10M3.500 7H9.500" stroke="#333" stroke-width="1.100"/></svg>
</body></html>
